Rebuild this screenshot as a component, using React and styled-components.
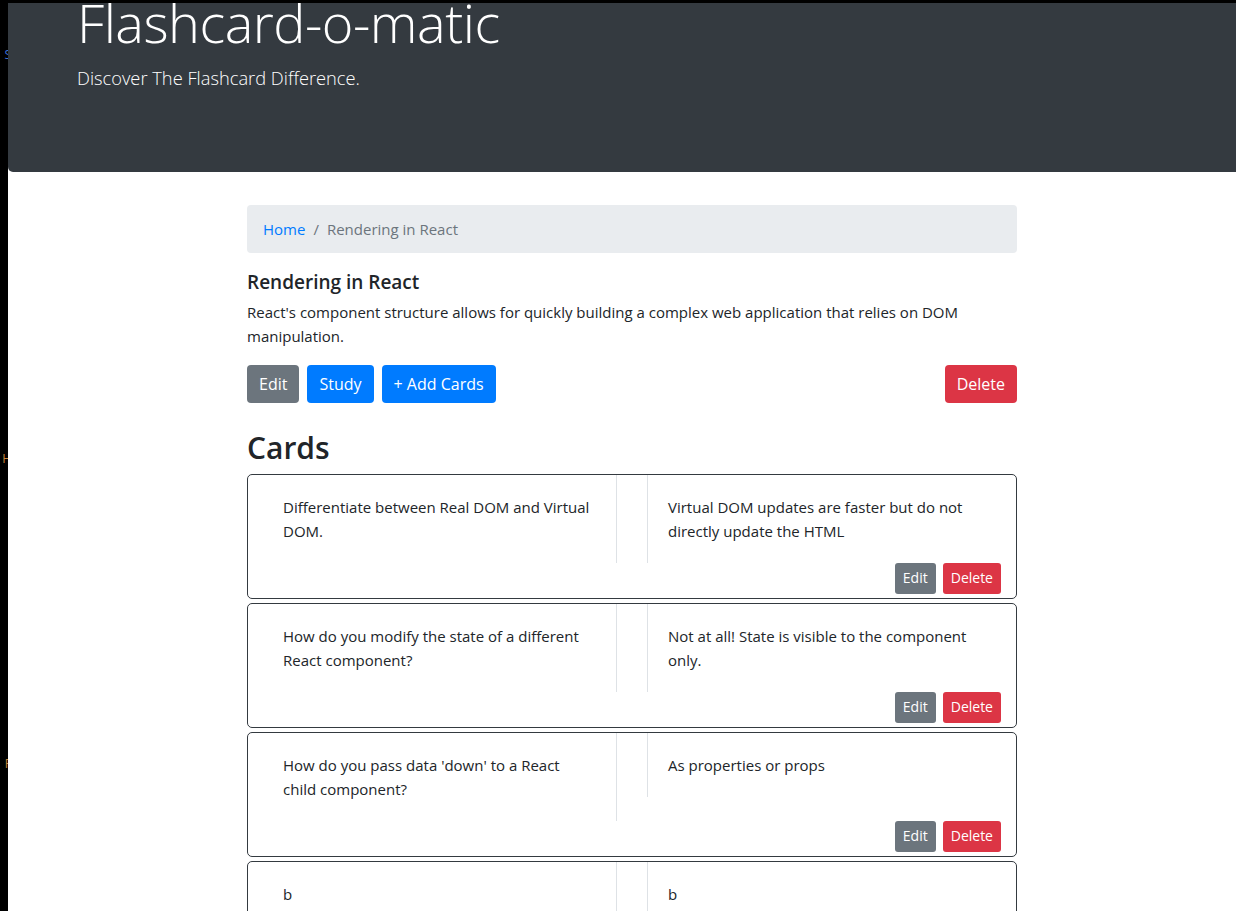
import React from "react";
import styled, { createGlobalStyle } from "styled-components";

const Global = createGlobalStyle`
  html, body { margin: 0; padding: 0; background: #fff; }
  body {
    font-family: "Open Sans", "Noto Sans", Arial, sans-serif;
    color: #212529;
    font-size: 16px;
    line-height: 1.5;
    overflow: hidden;
  }
  * { box-sizing: border-box; }
`;

const Page = styled.div`
  display: flex;
  height: 911px;
  overflow: hidden;
`;

const Strip = styled.div`
  width: 8px;
  flex: 0 0 8px;
  background: #000;
  overflow: hidden;
  display: flex;
  flex-direction: column;
  align-items: flex-end;
`;

const StripGlyph = styled.span`
  display: block;
  margin-top: ${(p) => p.$top}px;
  font-size: 12px;
  line-height: 12px;
  color: ${(p) => p.$color};
  margin-right: -3px;
`;

const Main = styled.div`
  flex: 1;
  border-top: 3px solid #000;
  min-width: 0;
`;

const Header = styled.header`
  background: #343a40;
  color: #fff;
  height: 169px;
  padding: 0 69px;
  border-bottom-left-radius: 5px;
  overflow: hidden;
  margin-bottom: 33px;
`;

const Title = styled.h1`
  margin: -13px 0 0;
  font-size: 54px;
  font-weight: 300;
  line-height: 1.2;
  letter-spacing: -0.5px;
`;

const Lead = styled.p`
  margin: 9px 0 0;
  font-size: 18.3px;
  font-weight: 300;
  line-height: 1.5;
`;

const Container = styled.main`
  width: 770px;
  margin-left: 239px;
`;

const Breadcrumb = styled.nav`
  display: flex;
  align-items: center;
  height: 48px;
  padding: 0 16px;
  background: #e9ecef;
  border-radius: 4px;
  margin-bottom: 18px;
  font-size: 15px;
`;

const Crumb = styled.span`
  color: ${(p) => (p.$active ? "#6c757d" : "#007bff")};
`;

const Sep = styled.span`
  color: #6c757d;
  padding: 0 8px;
`;

const DeckTitle = styled.h5`
  margin: 0 0 6px;
  font-size: 19px;
  font-weight: 600;
  line-height: 1.2;
`;

const Description = styled.p`
  margin: 0 0 17px;
  font-size: 15px;
  line-height: 24px;
`;

const Toolbar = styled.div`
  display: flex;
  gap: 8px;
  margin-bottom: 26px;
`;

const Spacer = styled.div`
  flex: 1;
`;

const colors = {
  secondary: "#6c757d",
  primary: "#007bff",
  danger: "#dc3545",
};

const Button = styled.button`
  font-family: inherit;
  border: none;
  color: #fff;
  background: ${(p) => colors[p.$variant]};
  height: ${(p) => (p.$small ? 31 : 38)}px;
  padding: ${(p) => (p.$small ? "0 8px" : "0 12px")};
  font-size: ${(p) => (p.$small ? 14 : 16)}px;
  border-radius: ${(p) => (p.$small ? 3 : 4)}px;
  line-height: 1;
  cursor: pointer;
`;

const SectionTitle = styled.h2`
  margin: 0 0 7px;
  font-size: 30px;
  font-weight: 600;
  line-height: 38px;
`;

const Card = styled.div`
  border: 1px solid #343a40;
  border-radius: 5px;
  margin-bottom: 4px;
  padding: 0 15px 4px;
`;

const CardRow = styled.div`
  display: flex;
  align-items: flex-start;
  gap: 30px;
`;

const Side = styled.div`
  flex: 1;
  padding: 20px;
  font-size: 15px;
  line-height: 24px;
  border-${(p) => (p.$front ? "right" : "left")}: 1px solid #dee2e6;
`;

const CardActions = styled.div`
  display: flex;
  justify-content: flex-end;
  gap: 7px;
`;

const cards = [
  {
    front: "Differentiate between Real DOM and Virtual DOM.",
    back: "Virtual DOM updates are faster but do not directly update the HTML",
  },
  {
    front: "How do you modify the state of a different React component?",
    back: "Not at all! State is visible to the component only.",
  },
  {
    front: "How do you pass data 'down' to a React child component?",
    back: "As properties or props",
  },
  { front: "b", back: "b" },
];

export default function App() {
  return (
    <>
      <Global />
      <Page>
        <Strip>
          <StripGlyph $top={49} $color="#3b6fd6">S</StripGlyph>
          <StripGlyph $top={392} $color="#c9853a">H</StripGlyph>
          <StripGlyph $top={293} $color="#c9853a">F</StripGlyph>
        </Strip>
        <Main>
          <Header>
            <Title>Flashcard-o-matic</Title>
            <Lead>Discover The Flashcard Difference.</Lead>
          </Header>
          <Container>
            <Breadcrumb>
              <Crumb>Home</Crumb>
              <Sep>/</Sep>
              <Crumb $active>Rendering in React</Crumb>
            </Breadcrumb>
            <DeckTitle>Rendering in React</DeckTitle>
            <Description>
              React's component structure allows for quickly building a complex web
              application that relies on DOM manipulation.
            </Description>
            <Toolbar>
              <Button $variant="secondary">Edit</Button>
              <Button $variant="primary">Study</Button>
              <Button $variant="primary">+ Add Cards</Button>
              <Spacer />
              <Button $variant="danger">Delete</Button>
            </Toolbar>
            <SectionTitle>Cards</SectionTitle>
            {cards.map((c, i) => (
              <Card key={i}>
                <CardRow>
                  <Side $front>{c.front}</Side>
                  <Side>{c.back}</Side>
                </CardRow>
                <CardActions>
                  <Button $small $variant="secondary">Edit</Button>
                  <Button $small $variant="danger">Delete</Button>
                </CardActions>
              </Card>
            ))}
          </Container>
        </Main>
      </Page>
    </>
  );
}
